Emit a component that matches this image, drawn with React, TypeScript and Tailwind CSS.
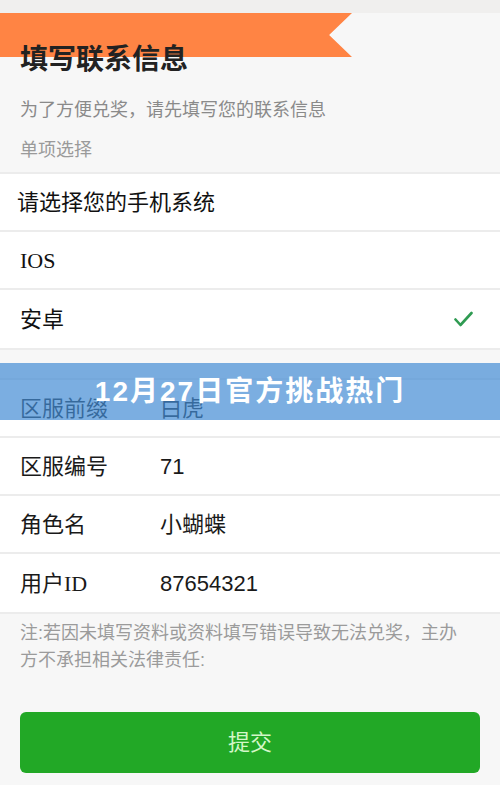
import React from "react";

const cjk = "font-['Liberation_Sans','Noto_Sans_CJK_SC',sans-serif]";
const serifCjk = "font-['Liberation_Serif','Noto_Sans_CJK_SC',serif]";

// Single form row: label on the left, value column after it
const InfoRow = ({ label, value }: { label: string; value: string }) => (
  <div className="h-[58px] flex items-center bg-white px-5">
    <span className={`w-[140px] text-[22px] text-[#1a1a1a] ${serifCjk}`}>{label}</span>
    <span className={`text-[22px] text-[#1a1a1a] ${cjk}`}>{value}</span>
  </div>
);

export default function App() {
  return (
    <div className={`relative w-[500px] h-[785px] overflow-hidden bg-[#f7f7f7] ${cjk}`}>
      {/* top strip */}
      <div className="h-[13px] bg-[#f0efee]" />

      {/* header */}
      <div className="relative px-5 pt-[30px] pb-[8px]">
        {/* orange ribbon */}
        <div className="absolute top-0 left-0 w-[352px] h-[44px] bg-[#ff8444] [clip-path:polygon(0_0,100%_0,93.5%_50%,100%_100%,0_100%)]" />
        <h1 className="relative text-[28px] leading-[34px] font-bold text-[#222]">填写联系信息</h1>
        <p className="mt-[20px] text-[18px] leading-[27px] text-[#8a8a8a]">
          为了方便兑奖，请先填写您的联系信息
        </p>
        <p className="mt-[13px] text-[18px] leading-[27px] text-[#9a9a9a]">单项选择</p>
      </div>

      {/* single choice */}
      <div className="border-t-2 border-b-2 border-[#ececec] divide-y-2 divide-[#ececec]">
        <div className="h-[58px] flex items-center bg-white pl-[17px]">
          <span className="text-[22px] text-[#111]">请选择您的手机系统</span>
        </div>
        <div className="h-[58px] flex items-center bg-white px-5">
          <span className={`text-[22px] text-[#111] ${serifCjk}`}>IOS</span>
        </div>
        <div className="h-[58px] flex items-center justify-between bg-white pl-5 pr-[27px]">
          <span className="text-[22px] text-[#111]">安卓</span>
          <svg width="19" height="17" viewBox="0 0 19 17" fill="none">
            <polyline
              points="1.5,8.5 6.5,14 17.5,2"
              stroke="#2f9b52"
              strokeWidth="2.6"
              strokeLinecap="round"
              strokeLinejoin="round"
            />
          </svg>
        </div>
      </div>

      {/* info fields */}
      <div className="mt-[28px] border-t-2 border-b-2 border-[#ececec] divide-y-2 divide-[#ececec]">
        <InfoRow label="区服前缀" value="白虎" />
        <InfoRow label="区服编号" value="71" />
        <InfoRow label="角色名" value="小蝴蝶" />
        <InfoRow label="用户ID" value="87654321" />
      </div>

      {/* note */}
      <p className="pl-5 pr-[26px] pt-[6px] text-[18px] leading-[27px] text-[#9b9b9b]">
        注:若因未填写资料或资料填写错误导致无法兑奖，主办方不承担相关法律责任:
      </p>

      {/* submit */}
      <div className="px-5 mt-[38px]">
        <button className="w-full h-[61px] rounded-[6px] bg-[#22a826] text-[22px] text-[#d4f7c8]">
          提交
        </button>
      </div>

      {/* blue banner overlay */}
      <div className="absolute left-0 right-0 top-[363px] h-[57px] bg-[rgba(67,139,212,0.7)] flex items-center justify-center">
        <span className="text-[28px] font-bold tracking-[2px] text-white">12月27日官方挑战热门</span>
      </div>
    </div>
  );
}
